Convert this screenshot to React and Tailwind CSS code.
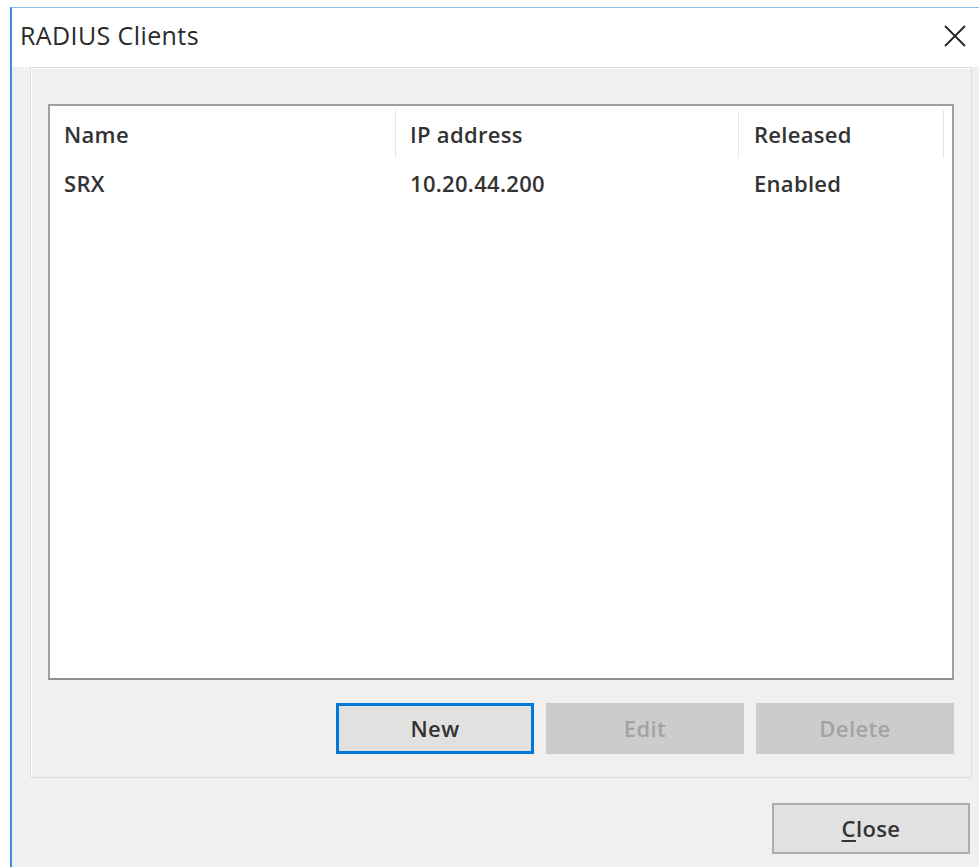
import React from 'react';

const font = { fontFamily: '"Open Sans", "Noto Sans", sans-serif' };

const clients = [
    { name: 'SRX', ip: '10.20.44.200', released: 'Enabled' },
];

const DialogButton = ({ children, disabled, focused, className = '' }) => {
    let look = 'bg-[#e1e1e1] border-2 border-[#adadad] text-[#333]';
    if (focused) look = 'bg-[#e1e1e1] border-[3px] border-[#0078d7] text-[#333]';
    if (disabled) look = 'bg-[#cccccc] border-2 border-[#cccccc] text-[#a3a3a3]';
    return (
        <button disabled={disabled} className={`h-[51px] w-[198px] flex items-center justify-center text-[22px] font-semibold tracking-[0.4px] ${look} ${className}`}>
            {children}
        </button>
    );
};

const App = () => {
    return (
        <div className="min-h-screen bg-white pt-[7px] pl-[10px] overflow-hidden" style={font}>
            <div className="h-[860px] border-t border-t-[#8ebde6] border-l-2 border-l-[#3d8ee0] bg-[#f0f0f0] flex flex-col">
                {/* title bar */}
                <div className="h-[59px] bg-white flex items-center justify-between pl-[8px] pr-[12px] shrink-0">
                    <span className="text-[25px] tracking-[0.4px] text-[#2a2a2a] pb-[4px]">RADIUS Clients</span>
                    <svg width="24" height="24" viewBox="0 0 24 24" className="mb-[4px]">
                        <path d="M2 2 L22 22 M22 2 L2 22" stroke="#222" strokeWidth="1.8" fill="none" />
                    </svg>
                </div>

                <div className="pl-[18px] pr-[7px]">
                    {/* group panel */}
                    <div className="border border-[#dcdcdc] shadow-[inset_1px_1px_0_#ffffff] px-[17px] pt-[36px] pb-[23px]">
                        <div className="h-[576px] bg-white border-2 border-[#a0a0a0] border-b-[#8f8f8f]">
                            <div className="grid grid-cols-[345px_343px_205px_1fr] h-[56px] items-center text-[22px] font-semibold tracking-[0.3px] text-[#333]">
                                <div className="pl-[14px]">Name</div>
                                <div className="pl-[14px] border-l border-[#e5e5e5] h-[48px] flex items-center">IP address</div>
                                <div className="pl-[15px] border-l border-[#e5e5e5] h-[48px] flex items-center">Released</div>
                                <div className="border-l border-[#e5e5e5] h-[48px]" />
                            </div>
                            {clients.map((c) => (
                                <div key={c.name} className="grid grid-cols-[345px_343px_205px_1fr] h-[42px] items-center text-[22px] font-semibold tracking-[0.3px] text-[#333]">
                                    <div className="pl-[14px]">{c.name}</div>
                                    <div className="pl-[15px]">{c.ip}</div>
                                    <div className="pl-[16px]">{c.released}</div>
                                </div>
                            ))}
                        </div>
                        <div className="flex justify-end gap-[12px] mt-[23px]">
                            <DialogButton focused>New</DialogButton>
                            <DialogButton disabled>Edit</DialogButton>
                            <DialogButton disabled>Delete</DialogButton>
                        </div>
                    </div>
                </div>

                <div className="flex justify-end pr-[9px] mt-[25px]">
                    <DialogButton>
                        <span><span className="underline underline-offset-[3px]">C</span>lose</span>
                    </DialogButton>
                </div>
            </div>
        </div>
    );
};

export default App;
